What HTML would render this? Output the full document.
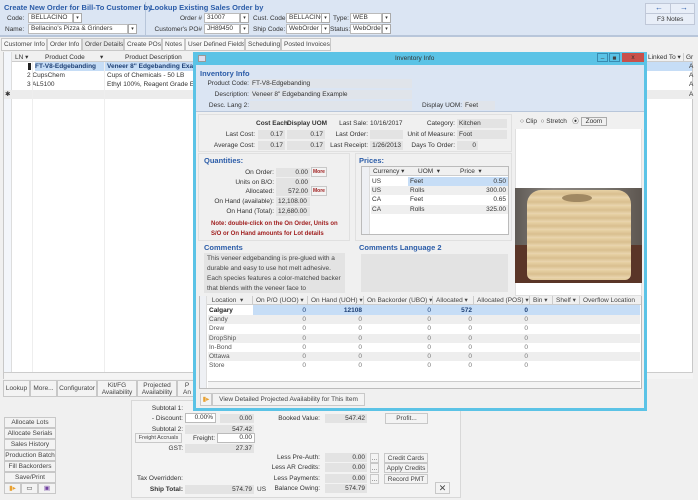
<!DOCTYPE html>
<html><head><meta charset="utf-8"><style>
*{margin:0;padding:0;box-sizing:border-box}
body{width:698px;height:500px;overflow:hidden;background:#f0f0f0;font-family:"Liberation Sans",sans-serif;font-size:6.5px;color:#333;position:relative}
div,span{position:absolute;white-space:nowrap}
.t{line-height:9px}
.r{text-align:right}
.bx{background:#e3e3e3;line-height:9px;height:9px;padding:0 2px}
.wb{background:#fff;border:1px solid #bbb;line-height:8px;height:10px;padding:0 2px}
.btn{background:#f3f3f3;border:1px solid #c8c8c8;text-align:center;line-height:9px;color:#444}
.h{color:#2b5ca8;font-weight:bold;font-size:7.5px}
.dd{width:9px;height:10px;border:1px solid #aaa;background:#fff;font-size:5px;text-align:center;line-height:8px}
.tab{top:38px;height:13px;border:1px solid #c8c8c8;background:#f7f7f7;line-height:11px;padding:0 2px;color:#444;overflow:hidden}
.gh{top:296px;line-height:9px;border-right:1px solid #ccc;padding-left:3px;height:9px;overflow:hidden;color:#444}
</style></head><body>
<!-- top header -->
<div style="left:0;top:0;width:698px;height:37px;background:#dbe5f3;border-bottom:2px solid #b8c6da"></div>
<div style="left:145px;top:2px;width:1px;height:33px;background:#b8c6da"></div>
<div class="t h" style="left:4px;top:3px">Create New Order for Bill-To Customer by</div>
<div class="t" style="left:7px;top:14px">Code:</div><div class="wb" style="left:28px;top:13px;width:45px">BELLACINO</div><div class="dd" style="left:73px;top:13px">▾</div>
<div class="t" style="left:5px;top:25px">Name:</div><div class="wb" style="left:28px;top:24px;width:100px">Bellacino's Pizza &amp; Grinders</div><div class="dd" style="left:128px;top:24px">▾</div>
<div class="t h" style="left:150px;top:3px">Lookup Existing Sales Order by</div>
<div class="t r" style="left:160px;top:14px;width:42px">Order #</div><div class="wb" style="left:204px;top:13px;width:36px">31007</div><div class="dd" style="left:240px;top:13px">▾</div>
<div class="t r" style="left:150px;top:25px;width:52px">Customer's PO#</div><div class="wb" style="left:204px;top:24px;width:36px">JH89450</div><div class="dd" style="left:240px;top:24px">▾</div>
<div class="t" style="left:253px;top:14px">Cust. Code:</div><div class="wb" style="left:286px;top:13px;width:36px;overflow:hidden">BELLACINO</div><div class="dd" style="left:321px;top:13px">▾</div>
<div class="t" style="left:253px;top:25px">Ship Code:</div><div class="wb" style="left:286px;top:24px;width:36px;overflow:hidden">WebOrder</div><div class="dd" style="left:321px;top:24px">▾</div>
<div class="t" style="left:333px;top:14px">Type:</div><div class="wb" style="left:350px;top:13px;width:32px">WEB</div><div class="dd" style="left:382px;top:13px">▾</div>
<div class="t" style="left:330px;top:25px">Status:</div><div class="wb" style="left:350px;top:24px;width:32px;overflow:hidden">WebOrder</div><div class="dd" style="left:382px;top:24px">▾</div>
<div style="left:645px;top:3px;width:50px;height:22px;border:1px solid #c0c8d8;background:#e8eef8"></div>
<div style="left:670px;top:3px;width:1px;height:10px;background:#c0c8d8"></div>
<div style="left:645px;top:13px;width:50px;height:1px;background:#c0c8d8"></div>
<div class="t" style="left:655px;top:3px;color:#2b5ca8;font-size:8px">←</div><div class="t" style="left:680px;top:3px;color:#2b5ca8;font-size:8px">→</div>
<div class="t" style="left:657px;top:15px">F3 Notes</div>
<!-- tabs -->
<div class="tab" style="left:1px;width:46px">Customer Info</div>
<div class="tab" style="left:47px;width:35px">Order Info</div>
<div class="tab" style="left:82px;width:42px;background:#e8e8e8">Order Details</div>
<div class="tab" style="left:124px;width:38px">Create POs</div>
<div class="tab" style="left:162px;width:23px">Notes</div>
<div class="tab" style="left:185px;width:60px">User Defined Fields</div>
<div class="tab" style="left:245px;width:36px">Scheduling</div>
<div class="tab" style="left:281px;width:50px">Posted Invoices</div>
<!-- main grid -->
<div style="left:3px;top:52px;width:690px;height:327px;background:#fff;border:1px solid #c8c8c8"></div>
<div style="left:4px;top:52px;width:689px;height:10px;background:#f0f0f0;border-bottom:1px solid #ccc"></div>
<div style="left:4px;top:52px;width:8px;height:326px;background:#f3f6fb;border-right:1px solid #ddd"></div>
<div class="t" style="left:15px;top:53px">LN ▾</div>
<div class="t" style="left:45px;top:53px">Product Code</div><div class="t" style="left:100px;top:53px">▾</div>
<div class="t" style="left:125px;top:53px">Product Description</div>
<div style="left:35px;top:62px;width:160px;height:9px;background:#c6ddf6"></div>
<div style="left:28px;top:63px;width:3px;height:7px;background:#222"></div>
<div class="t" style="left:35px;top:62px;font-weight:bold;color:#1d3f74">FT-V8-Edgebanding</div>
<div class="t" style="left:107px;top:62px;font-weight:bold;color:#1d3f74">Veneer 8" Edgebanding Example</div>
<div class="t" style="left:27px;top:71px">2 CupsChem</div><div class="t" style="left:107px;top:71px">Cups of Chemicals - 50 LB</div>
<div class="t" style="left:27px;top:80px">3 AL5100</div><div class="t" style="left:107px;top:80px">Ethyl 100%, Reagent Grade Ethyl</div>
<div style="left:4px;top:90px;width:689px;height:9px;background:#ececec"></div>
<div class="t" style="left:5px;top:90px">✱</div>
<div style="left:32px;top:62px;width:1px;height:310px;background:#eee"></div>
<div style="left:104px;top:62px;width:1px;height:310px;background:#eee"></div>
<div style="left:646px;top:62px;width:46px;height:9px;background:#c6ddf6"></div>
<div class="t" style="left:648px;top:53px">Linked To ▾</div><div class="t" style="left:683px;top:53px;border-left:1px solid #ccc;padding-left:2px">Gr</div>
<div class="t" style="left:689px;top:62px">A</div><div class="t" style="left:689px;top:71px">A</div><div class="t" style="left:689px;top:80px">A</div><div class="t" style="left:689px;top:90px">A</div>
<div style="left:4px;top:372px;width:689px;height:7px;background:#f4f4f4;border-top:1px solid #ccc"></div>
<!-- buttons row -->
<div class="btn" style="left:3px;top:380px;width:27px;height:17px;line-height:15px">Lookup</div>
<div class="btn" style="left:30px;top:380px;width:27px;height:17px;line-height:15px">More...</div>
<div class="btn" style="left:57px;top:380px;width:40px;height:17px;line-height:15px">Configurator</div>
<div class="btn" style="left:97px;top:380px;width:40px;height:17px;line-height:7px;padding-top:1px">Kit/FG<br>Availability</div>
<div class="btn" style="left:137px;top:380px;width:40px;height:17px;line-height:7px;padding-top:1px">Projected<br>Availability</div>
<div class="btn" style="left:177px;top:380px;width:20px;height:17px;line-height:7px;padding-top:1px">P<br>An</div>
<!-- bottom area -->
<div style="left:131px;top:400px;width:330px;height:98px;border:1px solid #d8d8d8;background:#f3f3f3"></div>
<div class="btn" style="left:4px;top:417px;width:52px;height:11px">Allocate Lots</div>
<div class="btn" style="left:4px;top:428px;width:52px;height:11px">Allocate Serials</div>
<div class="btn" style="left:4px;top:439px;width:52px;height:11px">Sales History</div>
<div class="btn" style="left:4px;top:450px;width:52px;height:11px">Production Batch</div>
<div class="btn" style="left:4px;top:461px;width:52px;height:11px">Fill Backorders</div>
<div class="btn" style="left:4px;top:472px;width:52px;height:11px">Save/Print</div>
<div class="btn" style="left:4px;top:483px;width:17px;height:11px;color:#e8a030">▮▸</div>
<div class="btn" style="left:21px;top:483px;width:17px;height:11px">▭</div>
<div class="btn" style="left:38px;top:483px;width:18px;height:11px;color:#7040a0">▣</div>
<div class="t r" style="left:130px;top:404px;width:53px">Subtotal 1:</div>
<div class="t r" style="left:130px;top:414px;width:53px">- Discount:</div><div class="wb" style="left:185px;top:413px;width:31px;text-align:right">0.00%</div><div class="bx r" style="left:220px;top:414px;width:34px">0.00</div>
<div class="t r" style="left:130px;top:425px;width:53px">Subtotal 2:</div><div class="bx r" style="left:185px;top:425px;width:69px">547.42</div>
<div class="btn" style="left:135px;top:433px;width:47px;height:10px;font-size:5.5px;line-height:8px">Freight Accruals</div>
<div class="t" style="left:193px;top:434px">Freight:</div><div class="wb" style="left:217px;top:433px;width:38px;text-align:right">0.00</div>
<div class="t r" style="left:130px;top:444px;width:53px">GST:</div><div class="bx r" style="left:185px;top:444px;width:69px">27.37</div>
<div class="t" style="left:137px;top:474px">Tax Overridden:</div>
<div class="t r" style="left:130px;top:485px;width:53px;font-weight:bold">Ship Total:</div><div class="bx r" style="left:185px;top:485px;width:69px">574.79</div><div class="t" style="left:257px;top:485px">US</div>
<div class="t r" style="left:260px;top:414px;width:60px">Booked Value:</div><div class="bx r" style="left:325px;top:414px;width:42px">547.42</div>
<div class="btn" style="left:385px;top:413px;width:43px;height:11px">Profit...</div>
<div class="t r" style="left:260px;top:453px;width:60px">Less Pre-Auth:</div><div class="bx r" style="left:325px;top:453px;width:42px">0.00</div><div class="btn" style="left:370px;top:453px;width:9px;height:10px">...</div><div class="btn" style="left:384px;top:453px;width:44px;height:10px">Credit Cards</div>
<div class="t r" style="left:260px;top:463px;width:60px">Less AR Credits:</div><div class="bx r" style="left:325px;top:463px;width:42px">0.00</div><div class="btn" style="left:370px;top:463px;width:9px;height:10px">...</div><div class="btn" style="left:384px;top:463px;width:44px;height:10px">Apply Credits</div>
<div class="t r" style="left:260px;top:474px;width:60px">Less Payments:</div><div class="bx r" style="left:325px;top:474px;width:42px">0.00</div><div class="btn" style="left:370px;top:474px;width:9px;height:10px">...</div><div class="btn" style="left:384px;top:474px;width:44px;height:10px">Record PMT</div>
<div class="t r" style="left:260px;top:484px;width:60px">Balance Owing:</div><div class="bx r" style="left:325px;top:484px;width:42px">574.79</div>
<div class="btn" style="left:435px;top:482px;width:15px;height:12px;font-size:9px;line-height:10px">✕</div>

<!-- dialog -->
<div style="left:193px;top:52px;width:454px;height:359px;background:#f0f0f0;border:3px solid #5bc3e6;border-top:0"></div>
<div style="left:193px;top:52px;width:454px;height:13px;background:#5bc3e6"></div>
<div style="left:198px;top:55px;width:8px;height:7px;background:#dde;border:1px solid #999"></div>
<div class="t" style="left:395px;top:54px;color:#333">Inventory Info</div>
<div class="btn" style="left:597px;top:53px;width:11px;height:9px;background:#5bc3e6;border-color:#3a8ab0">–</div>
<div class="btn" style="left:609px;top:53px;width:11px;height:9px;background:#5bc3e6;border-color:#3a8ab0">■</div>
<div style="left:622px;top:53px;width:22px;height:9px;background:#c9504a;color:#333;text-align:center;line-height:9px">x</div>
<div style="left:196px;top:65px;width:448px;height:47px;background:#dbe5f3;border-bottom:1px solid #b8c6da"></div>
<div class="t h" style="left:200px;top:69px">Inventory Info</div>
<div class="t r" style="left:200px;top:79px;width:49px">Product Code:</div><div class="bx" style="left:250px;top:79px;width:162px;background:#e0e4ea">FT-V8-Edgebanding</div>
<div class="t r" style="left:200px;top:90px;width:49px">Description:</div><div class="bx" style="left:250px;top:90px;width:162px;background:#e0e4ea">Veneer 8" Edgebanding Example</div>
<div class="t r" style="left:200px;top:101px;width:49px">Desc. Lang 2:</div><div class="bx" style="left:250px;top:101px;width:162px;background:#e0e4ea"></div>
<div class="t" style="left:422px;top:101px">Display UOM:</div><div class="bx" style="left:463px;top:101px;width:32px;background:#e0e4ea">Feet</div>
<!-- costs -->
<div style="left:198px;top:114px;width:314px;height:38px;border:1px solid #e0e0e0"></div>
<div class="t" style="left:256px;top:119px;font-weight:bold">Cost Each</div><div class="t" style="left:287px;top:119px;font-weight:bold">Display UOM</div>
<div class="t r" style="left:210px;top:130px;width:45px">Last Cost:</div><div class="bx r" style="left:258px;top:130px;width:27px">0.17</div><div class="bx r" style="left:287px;top:130px;width:38px">0.17</div>
<div class="t r" style="left:200px;top:141px;width:55px">Average Cost:</div><div class="bx r" style="left:258px;top:141px;width:27px">0.17</div><div class="bx r" style="left:287px;top:141px;width:38px">0.17</div>
<div class="t r" style="left:330px;top:119px;width:38px">Last Sale:</div><div class="t" style="left:370px;top:119px">10/16/2017</div>
<div class="t r" style="left:320px;top:130px;width:48px">Last Order:</div><div class="bx" style="left:370px;top:130px;width:33px"></div>
<div class="t r" style="left:320px;top:141px;width:48px">Last Receipt:</div><div class="bx r" style="left:370px;top:141px;width:33px">1/26/2013</div>
<div class="t r" style="left:400px;top:119px;width:55px">Category:</div><div class="bx" style="left:457px;top:119px;width:50px">Kitchen</div>
<div class="t r" style="left:395px;top:130px;width:60px">Unit of Measure:</div><div class="bx" style="left:457px;top:130px;width:50px">Foot</div>
<div class="t r" style="left:395px;top:141px;width:60px">Days To Order:</div><div class="bx r" style="left:457px;top:141px;width:21px">0</div>
<!-- quantities -->
<div style="left:198px;top:153px;width:152px;height:88px;border:1px solid #e0e0e0"></div>
<div class="t h" style="left:204px;top:156px">Quantities:</div>
<div class="t r" style="left:210px;top:168px;width:64px">On Order:</div><div class="bx r" style="left:276px;top:168px;width:34px">0.00</div><div class="btn" style="left:311px;top:167px;width:16px;height:10px;font-size:5px;color:#a02020;font-weight:bold">More</div>
<div class="t r" style="left:210px;top:178px;width:64px">Units on B/O:</div><div class="bx r" style="left:276px;top:178px;width:34px">0.00</div>
<div class="t r" style="left:210px;top:187px;width:64px">Allocated:</div><div class="bx r" style="left:276px;top:187px;width:34px">572.00</div><div class="btn" style="left:311px;top:186px;width:16px;height:10px;font-size:5px;color:#a02020;font-weight:bold">More</div>
<div class="t r" style="left:200px;top:197px;width:74px">On Hand (available):</div><div class="bx" style="left:276px;top:197px;width:34px">12,108.00</div>
<div class="t r" style="left:200px;top:207px;width:74px">On Hand (Total):</div><div class="bx" style="left:276px;top:207px;width:34px">12,680.00</div>
<div class="t" style="left:211px;top:219px;color:#a02020;font-weight:bold;line-height:10px;font-size:6px">Note: double-click on the On Order, Units on<br>S/O or On Hand amounts for Lot details</div>
<!-- prices -->
<div style="left:355px;top:153px;width:157px;height:88px;border:1px solid #e0e0e0"></div>
<div class="t h" style="left:359px;top:156px">Prices:</div>
<div style="left:361px;top:166px;width:148px;height:69px;background:#fff;border:1px solid #bbb"></div>
<div style="left:362px;top:167px;width:146px;height:9px;background:#f0f0f0;border-bottom:1px solid #ccc"></div>
<div style="left:362px;top:167px;width:8px;height:67px;background:#eef0f4;border-right:1px solid #ddd"></div>
<div class="t" style="left:373px;top:167px">Currency ▾</div><div class="t" style="left:418px;top:167px">UOM &nbsp;▾</div><div class="t" style="left:460px;top:167px">Price &nbsp;▾</div>
<div style="left:408px;top:177px;width:100px;height:9px;background:#c6ddf6"></div>
<div class="t" style="left:372px;top:177px">US</div><div class="t" style="left:410px;top:177px">Feet</div><div class="t r" style="left:450px;top:177px;width:56px">0.50</div>
<div style="left:371px;top:186px;width:137px;height:9px;background:#efefef"></div>
<div class="t" style="left:372px;top:186px">US</div><div class="t" style="left:410px;top:186px">Rolls</div><div class="t r" style="left:450px;top:186px;width:56px">300.00</div>
<div class="t" style="left:372px;top:195px">CA</div><div class="t" style="left:410px;top:195px">Feet</div><div class="t r" style="left:450px;top:195px;width:56px">0.65</div>
<div style="left:371px;top:205px;width:137px;height:9px;background:#efefef"></div>
<div class="t" style="left:372px;top:205px">CA</div><div class="t" style="left:410px;top:205px">Rolls</div><div class="t r" style="left:450px;top:205px;width:56px">325.00</div>
<!-- comments -->
<div class="t h" style="left:204px;top:243px">Comments</div>
<div style="left:204px;top:253px;width:141px;height:40px;background:#e3e3e3;overflow:hidden;white-space:normal;padding:1px 3px;line-height:10px;color:#444">This veneer edgebanding is pre-glued with a durable and easy to use hot melt adhesive. Each species features a color-matched backer that blends with the veneer face to</div>
<div class="t h" style="left:359px;top:243px">Comments Language 2</div>
<div style="left:361px;top:254px;width:147px;height:38px;background:#e3e3e3"></div>
<!-- image -->
<div style="left:515px;top:114px;width:127px;height:182px;background:#fff;border:1px solid #e0e0e0"></div>
<div style="left:515px;top:114px;width:127px;height:15px;background:#f0f0f0"></div>
<div class="t" style="left:520px;top:117px">○ Clip &nbsp;○ Stretch &nbsp; ⦿ <span style="position:static;border:1px solid #aaa;padding:0 4px">Zoom</span></div>
<div style="left:515px;top:188px;width:127px;height:95px;background:linear-gradient(90deg,#5f5a55,#8a8580 30%,#7a756e 70%,#5d5650)"></div>
<div style="left:515px;top:245px;width:127px;height:38px;background:#5a3528"></div>
<div style="left:527px;top:190px;width:104px;height:90px;border-radius:14px 14px 6px 6px;background:repeating-linear-gradient(180deg,#e8d2a6 0,#d9bf8f 4px,#ead6b0 8px)"></div>
<div style="left:562px;top:194px;width:30px;height:8px;border-radius:50%;background:#a08862"></div>
<!-- locations grid -->
<div style="left:199px;top:296px;width:443px;height:93px;background:#fff;border:1px solid #bbb"></div>
<div style="left:200px;top:296px;width:441px;height:9px;background:#f0f0f0;border-bottom:1px solid #ccc"></div>
<div style="left:200px;top:296px;width:7px;height:92px;background:#eef0f4;border-right:1px solid #ddd"></div>
<div class="gh" style="left:207px;width:46px">&nbsp;Location &nbsp;▾</div>
<div class="gh" style="left:253px;width:55px">On P/O (UOO) ▾</div>
<div class="gh" style="left:308px;width:56px">On Hand (UOH) ▾</div>
<div class="gh" style="left:364px;width:69px">On Backorder (UBO) ▾</div>
<div class="gh" style="left:433px;width:41px">Allocated ▾</div>
<div class="gh" style="left:474px;width:56px">Allocated (POS) ▾</div>
<div class="gh" style="left:530px;width:23px">Bin ▾</div>
<div class="gh" style="left:553px;width:27px">Shelf ▾</div>
<div class="gh" style="left:580px;width:60px;border:0">Overflow Location</div>
<div style="left:253px;top:305px;width:387px;height:10px;background:#c6ddf6"></div>
<div class="t" style="left:209px;top:306px;font-weight:bold;color:#222">Calgary</div>
<div class="t r" style="left:253px;top:306px;width:53px;color:#1d3f74">0</div><div class="t r" style="left:308px;top:306px;width:54px;color:#1d3f74;font-weight:bold">12108</div><div class="t r" style="left:364px;top:306px;width:67px;color:#1d3f74">0</div><div class="t r" style="left:433px;top:306px;width:39px;color:#1d3f74;font-weight:bold">572</div><div class="t r" style="left:474px;top:306px;width:54px;color:#1d3f74;font-weight:bold">0</div>
<div style="left:208px;top:315px;width:432px;height:9px;background:#eeeeee"></div>
<div style="left:208px;top:334px;width:432px;height:9px;background:#eeeeee"></div>
<div style="left:208px;top:352px;width:432px;height:9px;background:#eeeeee"></div>
<div class="t" style="left:209px;top:315px;color:#555;line-height:9.3px">Candy<br>Drew<br>DropShip<br>In-Bond<br>Ottawa<br>Store</div>
<div class="t r" style="left:253px;top:315px;width:53px;color:#777;line-height:9.3px">0<br>0<br>0<br>0<br>0<br>0</div>
<div class="t r" style="left:308px;top:315px;width:54px;color:#777;line-height:9.3px">0<br>0<br>0<br>0<br>0<br>0</div>
<div class="t r" style="left:364px;top:315px;width:67px;color:#777;line-height:9.3px">0<br>0<br>0<br>0<br>0<br>0</div>
<div class="t r" style="left:433px;top:315px;width:39px;color:#777;line-height:9.3px">0<br>0<br>0<br>0<br>0<br>0</div>
<div class="t r" style="left:474px;top:315px;width:54px;color:#777;line-height:9.3px">0<br>0<br>0<br>0<br>0<br>0</div>
<div style="left:208px;top:381px;width:432px;height:7px;background:#f4f4f4;border-top:1px solid #ccc"></div>
<div class="btn" style="left:200px;top:393px;width:12px;height:13px;color:#e8a030;line-height:11px">▮▸</div>
<div class="btn" style="left:212px;top:393px;width:153px;height:13px;line-height:11px">View Detailed Projected Availability for This Item</div>
</body></html>
